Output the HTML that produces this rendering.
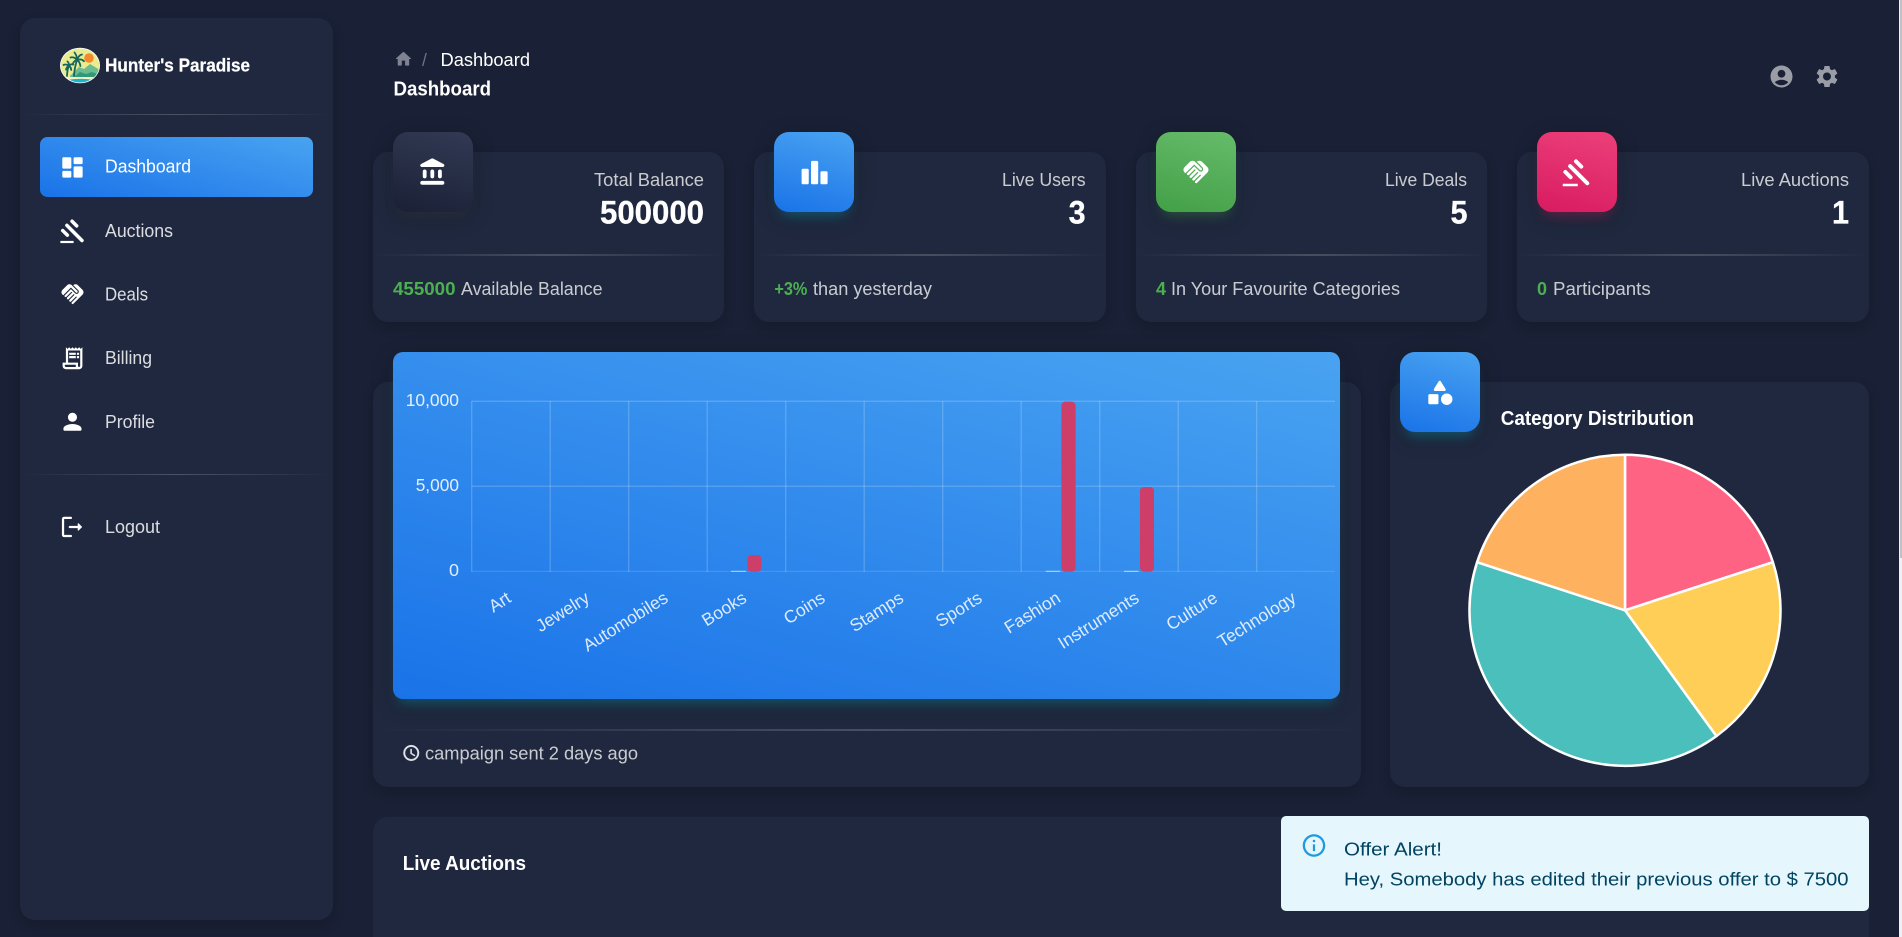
<!DOCTYPE html>
<html lang="en">
<head>
<meta charset="utf-8">
<title>Hunter's Paradise - Dashboard</title>
<style>
html,body{margin:0;padding:0;width:1902px;height:937px;overflow:hidden;background:#1a2035;font-family:"Liberation Sans",Arial,sans-serif}
#app{position:absolute;left:0;top:0;width:1902px;height:937px;overflow:hidden}
.b{position:absolute;box-sizing:border-box}
.card{background:#1f283e;border-radius:15px;box-shadow:0 5px 12px rgba(0,0,0,.14)}
.ic{width:80px;height:80px;border-radius:15px}
.info{background:linear-gradient(195deg,#49a3f1,#1a73e8);box-shadow:0 5px 25px rgba(0,0,0,.14),0 9px 13px -6px rgba(0,187,212,.4)}
.dark{background:linear-gradient(195deg,#323a54,#1a2035);box-shadow:0 5px 25px rgba(0,0,0,.14),0 9px 13px -6px rgba(64,64,64,.4)}
.green{background:linear-gradient(195deg,#66bb6a,#43a047);box-shadow:0 5px 25px rgba(0,0,0,.14),0 9px 13px -6px rgba(76,175,80,.4)}
.pink{background:linear-gradient(195deg,#ec407a,#d81b60);box-shadow:0 5px 25px rgba(0,0,0,.14),0 9px 13px -6px rgba(233,30,99,.4)}
.hr{height:2px;background:linear-gradient(to right,rgba(255,255,255,0),rgba(255,255,255,.18),rgba(255,255,255,0))}
.hr1{height:1px;background:linear-gradient(to right,rgba(255,255,255,0),rgba(255,255,255,.2),rgba(255,255,255,0))}
svg{position:absolute;left:0;top:0}
text{font-family:"Liberation Sans",Arial,sans-serif}
.nav{font-size:18px;fill:#fff;fill-opacity:.84}
.sub{font-size:18px;fill:#fff;fill-opacity:.76}
.val{font-size:32px;font-weight:700;fill:#fff}
.gr{font-size:18px;font-weight:700;fill:#4caf50}
.ttl{font-weight:700;fill:#fff}
.yl{font-size:17.5px;fill:#fff;fill-opacity:.86}
.xl{font-size:17.5px;fill:#fff;fill-opacity:.84;text-anchor:end}
.al{font-size:18px;fill:#014361}
</style>
</head>
<body>
<div id="app">
<div class="b card" style="left:20px;top:18px;width:313px;height:902px"></div>
<div class="b hr1" style="left:20px;top:114px;width:313px"></div>
<div class="b" style="left:40px;top:137px;width:273px;height:60px;border-radius:7.5px;background:linear-gradient(195deg,#49a3f1,#1a73e8)"></div>
<div class="b hr1" style="left:20px;top:474px;width:313px"></div>

<div class="b card" style="left:373px;top:152px;width:351px;height:170px"></div>
<div class="b card" style="left:754px;top:152px;width:352px;height:170px"></div>
<div class="b card" style="left:1136px;top:152px;width:351px;height:170px"></div>
<div class="b card" style="left:1517px;top:152px;width:352px;height:170px"></div>
<div class="b ic dark" style="left:393px;top:132px"></div>
<div class="b ic info" style="left:774px;top:132px"></div>
<div class="b ic green" style="left:1156px;top:132px"></div>
<div class="b ic pink" style="left:1537px;top:132px"></div>
<div class="b hr" style="left:373px;top:254px;width:351px"></div>
<div class="b hr" style="left:754px;top:254px;width:352px"></div>
<div class="b hr" style="left:1136px;top:254px;width:351px"></div>
<div class="b hr" style="left:1517px;top:254px;width:352px"></div>

<div class="b card" style="left:373px;top:382px;width:988px;height:405px"></div>
<div class="b" style="left:393px;top:352px;width:947px;height:347px;border-radius:10px;background:linear-gradient(195deg,#49a3f1,#1a73e8);box-shadow:0 5px 25px rgba(0,0,0,.14),0 9px 13px -6px rgba(0,187,212,.4)"></div>
<div class="b hr" style="left:373px;top:729px;width:988px"></div>

<div class="b card" style="left:1390px;top:382px;width:479px;height:405px"></div>
<div class="b ic info" style="left:1400px;top:352px"></div>

<div class="b card" style="left:373px;top:817px;width:1496px;height:120px;border-radius:15px 15px 0 0;box-shadow:none"></div>
<div class="b" style="left:1281px;top:816px;width:588px;height:95px;background:#e5f6fd;border-radius:5px"></div>

<div class="b" style="left:1899px;top:0;width:3px;height:937px;background:#f1f1f1"></div>
<div class="b" style="left:1900px;top:0;width:2px;height:558px;background:#c1c1c1"></div>

<svg width="1902" height="937" viewBox="0 0 1902 937" xmlns="http://www.w3.org/2000/svg">
<defs>
<g id="gavel" fill="none" stroke="#fff" stroke-linecap="round">
<path stroke-width="3.2" d="M6.9 6.9L20.6 20.6M11.6 3.1L15.8 7.3M3.1 11.6L7.3 15.8"/>
<path stroke-width="2" stroke-linecap="butt" d="M1 22H13"/>
</g>
<path id="hand" d="M16.48 10.41c-.39.39-1.04.39-1.43 0l-4.47-4.46-7.05 7.04-.66-.63c-1.17-1.17-1.17-3.07 0-4.24l4.24-4.24c1.17-1.17 3.07-1.17 4.24 0L16.48 9c.39.39.39 1.02 0 1.41zm.7-2.12c.78.78.78 2.05 0 2.83-1.27 1.27-2.61.22-2.83 0l-3.76-3.76-5.57 5.57c-.39.39-.39 1.02 0 1.41.39.39 1.02.39 1.42 0l4.62-4.62.71.71-4.62 4.62c-.39.39-.39 1.02 0 1.41.39.39 1.02.39 1.42 0l4.62-4.62.71.71-4.62 4.62c-.39.39-.39 1.02 0 1.41.39.39 1.02.39 1.41 0l4.62-4.62.71.71-4.62 4.62c-.39.39-.39 1.02 0 1.41.39.39 1.02.39 1.41 0l8.32-8.34c1.17-1.17 1.17-3.07 0-4.24l-4.24-4.24c-1.15-1.15-3.01-1.17-4.18-.06l4.32 4.31z"/>
<clipPath id="lg"><ellipse cx="80" cy="65.5" rx="19.2" ry="17"/></clipPath>
</defs>

<!-- logo -->
<ellipse cx="80" cy="65.5" rx="20" ry="17.8" fill="#fff"/>
<g clip-path="url(#lg)">
<rect x="60" y="48" width="40" height="36" fill="#e9ec90"/>
<circle cx="89" cy="58" r="4.8" fill="#f58a2c"/>
<path d="M70 76l9-9 5 2 6-5 10 6v10H70z" fill="#6dbb90"/>
<path d="M73 78l7-6 6 2 6-2 8 3v6H73z" fill="#2e9a78"/>
<rect x="60" y="77" width="40" height="7" fill="#f4f1c4"/>
<path d="M68 80c5-1.5 20-1.5 25 0v4H68z" fill="#19b5d0"/>
<g fill="none" stroke="#15665c" stroke-width="1.8" stroke-linecap="round">
<path d="M74 76c.3-5 1.4-11 3-16M67 76c.1-3 .6-7 1.8-10"/>
<path d="M77 60c-2-2.5-4-3.2-6.5-2.5M77 60c0-3-.5-5-2.5-7.5M77 60c1-3 2.5-5 5-5.5M77 60c2.5-1 5-.8 7 1.2M77 60c2 1 3 3 3.4 6M77 60c-2 .5-3.6 2-4.4 4.5"/>
<path d="M68.8 66c-1.6-1.5-3.6-1.8-5.3-1M68.8 66c.4-2-.1-3.4-1.4-4.6M68.8 66c1.2-1.6 3-2 4.6-1.5M68.8 66c1.4.6 2.3 2 2.4 4M68.8 66c-1.4.6-2.4 1.8-2.7 3.6"/>
</g>
</g>
<text class="ttl" x="105" y="71.5" font-size="18" stroke="#fff" stroke-width=".25" textLength="145" lengthAdjust="spacingAndGlyphs">Hunter's Paradise</text>

<!-- sidebar nav -->
<g fill="#fff">
<path transform="translate(58.9 153.9) scale(1.13)" d="M4 13h6c.55 0 1-.45 1-1V4c0-.55-.45-1-1-1H4c-.55 0-1 .45-1 1v8c0 .55.45 1 1 1zm0 8h6c.55 0 1-.45 1-1v-4c0-.55-.45-1-1-1H4c-.55 0-1 .45-1 1v4c0 .55.45 1 1 1zm10 0h6c.55 0 1-.45 1-1v-8c0-.55-.45-1-1-1h-6c-.55 0-1 .45-1 1v8c0 .55.45 1 1 1zM13 4v4c0 .55.45 1 1 1h6c.55 0 1-.45 1-1V4c0-.55-.45-1-1-1h-6c-.55 0-1 .45-1 1z"/>
<use href="#gavel" transform="translate(59.3 217.8) scale(1.1)"/>
<use href="#hand" transform="translate(59.3 281) scale(1.1)"/>
<g transform="translate(59.3 345) scale(1.1)"><path fill-rule="evenodd" d="M19.5 3.5 18 2l-1.5 1.5L15 2l-1.5 1.5L12 2l-1.5 1.5L9 2 7.5 3.5 6 2v14H3v3c0 1.66 1.34 3 3 3h12c1.66 0 3-1.34 3-3V2l-1.5 1.5zM15 20H6c-.55 0-1-.45-1-1v-1h10v2zm4-1c0 .55-.45 1-1 1s-1-.45-1-1v-3H8V5h11v14z"/><path d="M9 7h6v2H9zm7 0h2v2h-2zm-7 3h6v2H9zm7 0h2v2h-2z"/></g>
<path transform="translate(58.9 408.2) scale(1.13)" d="M12 12c2.21 0 4-1.79 4-4s-1.79-4-4-4-4 1.79-4 4 1.79 4 4 4zm0 2c-2.67 0-8 1.34-8 4v1c0 .55.45 1 1 1h14c.55 0 1-.45 1-1v-1c0-2.66-5.33-4-8-4z"/>
<g transform="translate(58.5 513.4) scale(1.13)"><path d="M5 5h6c.55 0 1-.45 1-1s-.45-1-1-1H5c-1.1 0-2 .9-2 2v14c0 1.1.9 2 2 2h6c.55 0 1-.45 1-1s-.45-1-1-1H5V5z"/><path d="M20.65 11.65l-2.79-2.79c-.32-.32-.86-.1-.86.35V11h-7c-.55 0-1 .45-1 1s.45 1 1 1h7v1.79c0 .45.54.67.85.35l2.79-2.79c.2-.19.2-.51.01-.7z"/></g>
</g>
<text class="nav" style="fill-opacity:1" x="105" y="172.5" textLength="86" lengthAdjust="spacingAndGlyphs">Dashboard</text>
<text class="nav" x="105" y="237" textLength="68" lengthAdjust="spacingAndGlyphs">Auctions</text>
<text class="nav" x="105" y="300.7" textLength="43" lengthAdjust="spacingAndGlyphs">Deals</text>
<text class="nav" x="105" y="364" textLength="47" lengthAdjust="spacingAndGlyphs">Billing</text>
<text class="nav" x="105" y="428" textLength="50" lengthAdjust="spacingAndGlyphs">Profile</text>
<text class="nav" x="105" y="533" textLength="55" lengthAdjust="spacingAndGlyphs">Logout</text>

<!-- top bar -->
<path transform="translate(393.6 49.2) scale(.82)" fill="#7f8290" d="M10 19v-5h4v5c0 .55.45 1 1 1h3c.55 0 1-.45 1-1v-7h1.7c.46 0 .68-.57.33-.87L12.67 3.6c-.38-.34-.96-.34-1.34 0l-8.36 7.53c-.34.3-.13.87.33.87H5v7c0 .55.45 1 1 1h3c.55 0 1-.45 1-1z"/>
<text x="422" y="66" font-size="17.5" fill="#6f7383">/</text>
<text x="440.5" y="66" font-size="18" fill="#fff" textLength="89.5" lengthAdjust="spacingAndGlyphs">Dashboard</text>
<text class="ttl" x="393.5" y="95.5" font-size="20" textLength="97.5" lengthAdjust="spacingAndGlyphs">Dashboard</text>
<path transform="translate(1768.3 63.3) scale(1.1)" fill="#9a9ca6" d="M12 2C6.48 2 2 6.48 2 12s4.48 10 10 10 10-4.48 10-10S17.52 2 12 2zm0 4c1.93 0 3.5 1.57 3.5 3.5S13.93 13 12 13s-3.5-1.57-3.5-3.5S10.07 6 12 6zm0 14c-2.03 0-4.43-.82-6.14-2.88C7.55 15.8 9.68 15 12 15s4.45.8 6.14 2.12C16.43 19.18 14.03 20 12 20z"/>
<path transform="translate(1813.8 63.3) scale(1.1)" fill="#9a9ca6" d="M19.14 12.94c.04-.3.06-.61.06-.94 0-.32-.02-.64-.07-.94l2.03-1.58c.18-.14.23-.41.12-.61l-1.92-3.32c-.12-.22-.37-.29-.59-.22l-2.39.96c-.5-.38-1.03-.7-1.62-.94l-.36-2.54c-.04-.24-.24-.41-.48-.41h-3.84c-.24 0-.43.17-.47.41l-.36 2.54c-.59.24-1.13.57-1.62.94l-2.39-.96c-.22-.08-.47 0-.59.22L2.74 8.87c-.12.21-.08.47.12.61l2.03 1.58c-.05.3-.09.63-.09.94s.02.64.07.94l-2.03 1.58c-.18.14-.23.41-.12.61l1.92 3.32c.12.22.37.29.59.22l2.39-.96c.5.38 1.03.7 1.62.94l.36 2.54c.05.24.24.41.48.41h3.84c.24 0 .44-.17.47-.41l.36-2.54c.59-.24 1.13-.56 1.62-.94l2.39.96c.22.08.47 0 .59-.22l1.92-3.32c.12-.22.07-.47-.12-.61l-2.01-1.58zM12 15.6c-1.98 0-3.6-1.62-3.6-3.6s1.62-3.6 3.6-3.6 3.6 1.62 3.6 3.6-1.62 3.6-3.6 3.6z"/>

<!-- stat card icons -->
<g fill="#fff">
<path transform="translate(417.7 156.8) scale(1.27)" d="M4 11.5v4c0 .83.67 1.5 1.5 1.5S7 16.33 7 15.5v-4c0-.83-.67-1.5-1.5-1.5S4 10.67 4 11.5zm6 0v4c0 .83.67 1.5 1.5 1.5s1.5-.67 1.5-1.5v-4c0-.83-.67-1.5-1.5-1.5s-1.5.67-1.5 1.5zM3.5 22h16c.83 0 1.5-.67 1.5-1.5s-.67-1.5-1.5-1.5h-16c-.83 0-1.5.67-1.5 1.5S2.67 22 3.5 22zM16 11.5v4c0 .83.67 1.5 1.5 1.5s1.5-.67 1.5-1.5v-4c0-.83-.67-1.5-1.5-1.5s-1.5.67-1.5 1.5zM10.57 1.49l-7.9 4.16c-.41.21-.67.64-.67 1.1C2 7.44 2.56 8 3.25 8h16.51C20.44 8 21 7.44 21 6.75c0-.46-.26-.89-.67-1.1l-7.9-4.16c-.58-.31-1.28-.31-1.86 0z"/>
<path transform="translate(799 157) scale(1.3)" d="M6.5 21H3c-.55 0-1-.45-1-1V10c0-.55.45-1 1-1h3.5c.55 0 1 .45 1 1v10c0 .55-.45 1-1 1zm7.25-18h-3.5c-.55 0-1 .45-1 1v16c0 .55.45 1 1 1h3.5c.55 0 1-.45 1-1V4c0-.55-.45-1-1-1zM21 11h-3.5c-.55 0-1 .45-1 1v8c0 .55.45 1 1 1H21c.55 0 1-.45 1-1v-8c0-.55-.45-1-1-1z"/>
<use href="#hand" transform="translate(1181 157) scale(1.25)"/>
<use href="#gavel" transform="translate(1561.5 157.5) scale(1.25)"/>
<g transform="translate(1424.5 377) scale(1.27)"><path d="M11.15 3.4L7.43 9.48c-.41.66.07 1.52.85 1.52h7.43c.78 0 1.26-.86.85-1.52L12.85 3.4c-.39-.64-1.31-.64-1.7 0z"/><circle cx="17.5" cy="17.5" r="4.5"/><path d="M4 21.5h6c.55 0 1-.45 1-1v-6c0-.55-.45-1-1-1H4c-.55 0-1 .45-1 1v6c0 .55.45 1 1 1z"/></g>
</g>

<!-- stat card text -->
<text class="sub" x="594" y="186" textLength="110" lengthAdjust="spacingAndGlyphs">Total Balance</text>
<text class="val" x="600" y="223.3" stroke="#fff" stroke-width=".3" textLength="104" lengthAdjust="spacingAndGlyphs">500000</text>
<text class="gr" x="393" y="295" textLength="62.5" lengthAdjust="spacingAndGlyphs">455000</text>
<text class="sub" x="461" y="295" textLength="141.5" lengthAdjust="spacingAndGlyphs">Available Balance</text>

<text class="sub" x="1002" y="186" textLength="83.6" lengthAdjust="spacingAndGlyphs">Live Users</text>
<text class="val" x="1068.6" y="223.3" stroke="#fff" stroke-width=".3" textLength="17" lengthAdjust="spacingAndGlyphs">3</text>
<text class="gr" x="774.4" y="295" textLength="33" lengthAdjust="spacingAndGlyphs">+3%</text>
<text class="sub" x="813" y="295" textLength="119" lengthAdjust="spacingAndGlyphs">than yesterday</text>

<text class="sub" x="1385" y="186" textLength="82" lengthAdjust="spacingAndGlyphs">Live Deals</text>
<text class="val" x="1450.5" y="223.3" stroke="#fff" stroke-width=".3" textLength="17" lengthAdjust="spacingAndGlyphs">5</text>
<text class="gr" x="1156" y="295" textLength="10" lengthAdjust="spacingAndGlyphs">4</text>
<text class="sub" x="1171" y="295" textLength="229" lengthAdjust="spacingAndGlyphs">In Your Favourite Categories</text>

<text class="sub" x="1741" y="186" textLength="108" lengthAdjust="spacingAndGlyphs">Live Auctions</text>
<text class="val" x="1832" y="223.3" stroke="#fff" stroke-width=".3" textLength="17" lengthAdjust="spacingAndGlyphs">1</text>
<text class="gr" x="1537" y="295" textLength="10" lengthAdjust="spacingAndGlyphs">0</text>
<text class="sub" x="1553" y="295" textLength="97.7" lengthAdjust="spacingAndGlyphs">Participants</text>

<!-- bar chart -->
<g stroke="#fff" stroke-opacity=".2" stroke-width="1.25" fill="none">
<path d="M471.7 401.3H1335M471.7 486.3H1335"/>
<path d="M471.7 401V572M550.2 401V572M628.7 401V572M707.2 401V572M785.7 401V572M864.2 401V572M942.7 401V572M1021.2 401V572M1099.7 401V572M1178.2 401V572M1256.7 401V572"/>
</g>
<path d="M471.7 571.4H1335" stroke="#fff" stroke-opacity=".12" stroke-width="1.25"/>
<path d="M731 571.4h15M1045.7 571.4h14.5M1124 571.4h14.5" stroke="#fff" stroke-opacity=".5" stroke-width="1.25"/>
<g fill="#cd3f69">
<rect x="747.3" y="555" width="14" height="16.8" rx="4"/>
<rect x="1061.4" y="401.6" width="14.2" height="170.2" rx="4"/>
<rect x="1140" y="487" width="14" height="84.8" rx="4"/>
</g>
<text class="yl" x="405.7" y="406" textLength="53.3" lengthAdjust="spacingAndGlyphs">10,000</text>
<text class="yl" x="415.7" y="491" textLength="43.3" lengthAdjust="spacingAndGlyphs">5,000</text>
<text class="yl" x="449" y="575.8" textLength="10" lengthAdjust="spacingAndGlyphs">0</text>
<g>
<text class="xl" transform="translate(512.3 601) rotate(-32)">Art</text>
<text class="xl" transform="translate(590.8 601) rotate(-32)">Jewelry</text>
<text class="xl" transform="translate(669.3 601) rotate(-32)">Automobiles</text>
<text class="xl" transform="translate(747.8 601) rotate(-32)">Books</text>
<text class="xl" transform="translate(826.3 601) rotate(-32)">Coins</text>
<text class="xl" transform="translate(904.8 601) rotate(-32)">Stamps</text>
<text class="xl" transform="translate(983.3 601) rotate(-32)">Sports</text>
<text class="xl" transform="translate(1061.8 601) rotate(-32)">Fashion</text>
<text class="xl" transform="translate(1140.3 601) rotate(-32)">Instruments</text>
<text class="xl" transform="translate(1218.8 601) rotate(-32)">Culture</text>
<text class="xl" transform="translate(1297.3 601) rotate(-32)">Technology</text>
</g>

<path transform="translate(401.9 743.6) scale(.78)" fill="#e2e4e8" stroke="#e2e4e8" stroke-width=".5" d="M11.99 2C6.47 2 2 6.48 2 12s4.47 10 9.99 10C17.52 22 22 17.52 22 12S17.52 2 11.99 2zM12 20c-4.42 0-8-3.58-8-8s3.58-8 8-8 8 3.58 8 8-3.58 8-8 8zm.5-13H11v6l5.25 3.15.75-1.23-4.5-2.67z"/>
<text class="sub" x="425" y="759.3" textLength="213" lengthAdjust="spacingAndGlyphs">campaign sent 2 days ago</text>

<!-- pie -->
<g stroke="#fff" stroke-width="2.5" stroke-linejoin="round">
<path fill="#ff6384" d="M1625 610.3V454.8A155.5 155.5 0 0 1 1772.9 562.2Z"/>
<path fill="#ffce56" d="M1625 610.3L1772.9 562.2A155.5 155.5 0 0 1 1716.4 736.1Z"/>
<path fill="#4abfbc" d="M1625 610.3L1716.4 736.1A155.5 155.5 0 0 1 1477.1 562.2Z"/>
<path fill="#feb25f" d="M1625 610.3L1477.1 562.2A155.5 155.5 0 0 1 1625 454.8Z"/>
</g>
<text class="ttl" x="1500.7" y="425" font-size="20.5" textLength="193.3" lengthAdjust="spacingAndGlyphs">Category Distribution</text>

<text class="ttl" x="402.7" y="870" font-size="20" textLength="123.3" lengthAdjust="spacingAndGlyphs">Live Auctions</text>

<!-- alert -->
<path transform="translate(1300.5 832) scale(1.125)" fill="#1f9bdd" d="M11 7h2v2h-2zm0 4h2v6h-2zm1-9C6.48 2 2 6.48 2 12s4.48 10 10 10 10-4.48 10-10S17.52 2 12 2zm0 18c-4.41 0-8-3.59-8-8s3.59-8 8-8 8 3.59 8 8-3.59 8-8 8z"/>
<text class="al" x="1344" y="855.5" textLength="98" lengthAdjust="spacingAndGlyphs">Offer Alert!</text>
<text class="al" x="1344" y="885.5" textLength="504.5" lengthAdjust="spacingAndGlyphs">Hey, Somebody has edited their previous offer to $ 7500</text>
</svg>
</div>
</body>
</html>
